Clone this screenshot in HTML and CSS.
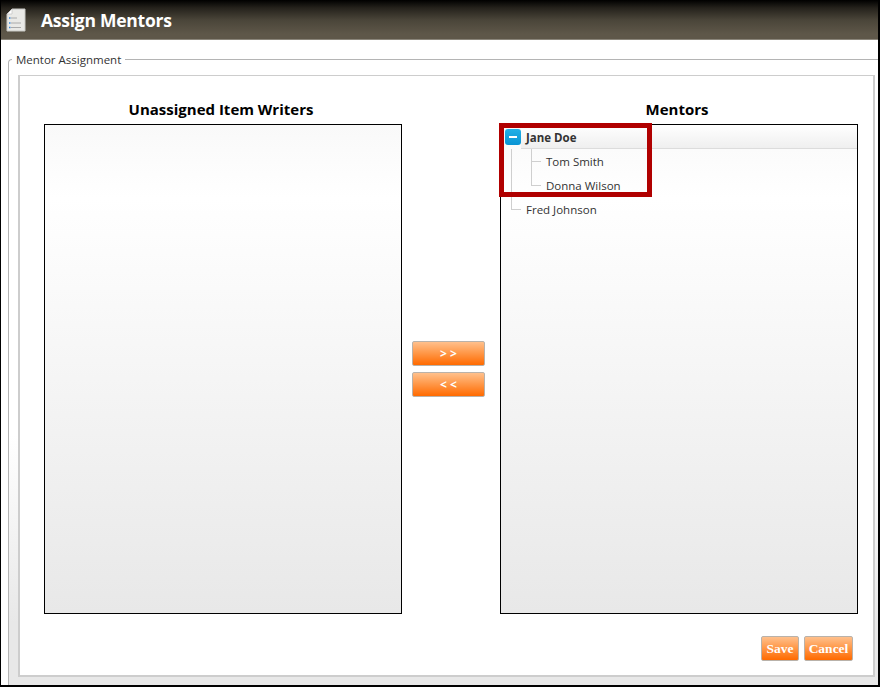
FILE: index.html
```html
<!DOCTYPE html>
<html lang="en">
<head>
<meta charset="utf-8">
<title>Assign Mentors</title>
<link rel="stylesheet" href="styles.css">
</head>
<body>
<div class="window">
  <header class="titlebar">
    <svg class="doc-icon" width="20" height="24" viewBox="0 0 20 24">
      <path d="M6 1H19V23H1V6Z" fill="#e9e9e6" stroke="#c8c8c4" stroke-width="1"/>
      <path d="M1 6H6V1Z" fill="#fff" stroke="#bbb" stroke-width=".6"/>
      <path d="M5 10H11M5 15H15M5 19.500H15" stroke="#aaa" stroke-width="1"/>
      <path d="M3 10H4.500M3 15H4.500M3 19.500H4.500" stroke="#3a86d8" stroke-width="1.500"/>
    </svg>
    <h1 class="title">Assign Mentors</h1>
  </header>
  <fieldset class="group">
    <legend class="group-label">Mentor Assignment</legend>
    <div class="panel">
      <div class="columns">
        <section class="column">
          <h2 class="col-title">Unassigned Item Writers</h2>
          <div class="listbox"></div>
        </section>
        <div class="movers">
          <button class="btn move" type="button">&gt; &gt;</button>
          <button class="btn move" type="button">&lt; &lt;</button>
        </div>
        <section class="column">
          <h2 class="col-title">Mentors</h2>
          <div class="listbox tree">
            <div class="row row-selected">
              <span class="toggle"><span class="minus"></span></span>
              <span class="name strong">Jane Doe</span>
            </div>
            <div class="row child first-child"><span class="name">Tom Smith</span></div>
            <div class="row child last-child"><span class="name">Donna Wilson</span></div>
            <div class="row root-leaf"><span class="name">Fred Johnson</span></div>
            <div class="highlight"></div>
          </div>
        </section>
      </div>
      <div class="actions">
        <button class="btn action" type="button">Save</button>
        <button class="btn action" type="button">Cancel</button>
      </div>
    </div>
  </fieldset>
</div>
</body>
</html>
```
FILE: styles.css
```css
* { box-sizing: border-box; }
html, body { margin: 0; padding: 0; }
body { width: 880px; height: 687px; background: #fff; font-family: "Open Sans", "Noto Sans", sans-serif; overflow: hidden; }

.window {
  width: 880px; height: 687px;
  border-left: 1px solid #000;
  border-right: 2px solid #000;
  border-bottom: 2px solid #000;
  display: flex; flex-direction: column;
}

.titlebar {
  height: 40px; flex: none;
  display: flex; align-items: center;
  padding: 0 0 0 5px;
  background: linear-gradient(#000 0, #25221c 8px, #4a4539 20px, #5e5749 34px, #5e5749 39px, #8a857a 39px, #8a857a 40px);
}
.doc-icon { flex: none; margin-top: -1px; }
.title { margin: 0 0 0 15px; font-size: 17.500px; font-weight: 700; color: #fff; letter-spacing: -.25px; }

.group {
  flex: 1; min-height: 0;
  margin: 12px 0 0 7px;
  padding: 7px 3px 8px 9px;
  min-width: 0;
  border: 1px solid #b4b4b4;
  border-right: 0; border-bottom: 0;
  border-top-left-radius: 4px;
  background: linear-gradient(#fff 60%, #e8e8e8 90%);
}
.group-label { margin-left: -6px; padding: 0 4px; font-size: 11.500px; color: #333; line-height: 15px; }

.panel {
  height: 602px;
  margin-top: 1px;
  border: 2px solid #cdcdcd; border-width: 1px 2px 2px 2px;
  background: #fff;
  padding: 23px 14px 15px 24px;
  display: flex; flex-direction: column;
}

.columns { display: flex; }
.column { width: 358px; flex: none; }
.col-title { margin: 0 0 4px; padding-right: 4px; height: 21px; line-height: 21px; font-size: 15px; font-weight: 700; text-align: center; color: #000; }

.listbox {
  position: relative;
  height: 490px;
  border: 1px solid #000;
  background: linear-gradient(#f9f9f9 0, #fff 15%, #e8e8e8 100%);
}

.movers {
  width: 98px; flex: none;
  padding-top: 217px;
  display: flex; flex-direction: column; align-items: flex-start; gap: 6px;
  margin-top: 25px;
  padding-left: 10px;
}

.btn {
  border: 1px solid #b9b2aa;
  border-radius: 2px;
  padding: 0;
  color: #fff;
  background: linear-gradient(#ffc08c, #ff9a4c 45%, #ff6a00);
  font-weight: 700;
}
.move { width: 73px; height: 25px; font-family: "Open Sans", sans-serif; font-size: 12px; }
.action { height: 25px; font-family: "Liberation Serif", serif; font-size: 13.500px; }
.action:first-child { width: 38px; }
.action:last-child { width: 49px; }

.actions { display: flex; justify-content: flex-end; gap: 5px; margin-top: 22px; padding-right: 6px; }

.row { height: 24px; display: flex; align-items: center; position: relative; font-size: 11.500px; color: #333; padding: 2px 0 0 25px; }
.name { line-height: 16px; }
.strong { font-weight: 700; }
.row-selected {
  background: linear-gradient(#fff, #efefef);
  border-bottom: 1px solid #dcdcdc;
  margin-left: 20px; padding-left: 5px;
}
.toggle {
  position: absolute; left: -16px; top: 4px;
  width: 16px; height: 16px; border-radius: 3px;
  background: linear-gradient(#22b0e6, #0a94d4);
  display: flex; align-items: center; justify-content: center;
}
.minus { width: 8px; height: 2px; background: #fff; }

.child { padding-left: 45px; }
.child::before, .child::after, .root-leaf::before, .root-leaf::after { content: ""; position: absolute; }
.child::before { left: 30px; top: 0; width: 1px; height: 12px; background: #cfcfcf; }
.child::after { left: 30px; top: 12px; width: 10px; height: 1px; background: #cfcfcf; }
.first-child::before { height: 24px; }
.first-child, .last-child { background: linear-gradient(90deg, transparent 10px, #cfcfcf 10px, #cfcfcf 11px, transparent 11px); }
.root-leaf::before { left: 10px; top: 0; width: 1px; height: 12px; background: #cfcfcf; }
.root-leaf::after { left: 10px; top: 12px; width: 10px; height: 1px; background: #cfcfcf; }

.highlight {
  position: absolute; left: -2px; top: -2px;
  width: 153px; height: 74px;
  border: 5px solid #b00000;
}
```
